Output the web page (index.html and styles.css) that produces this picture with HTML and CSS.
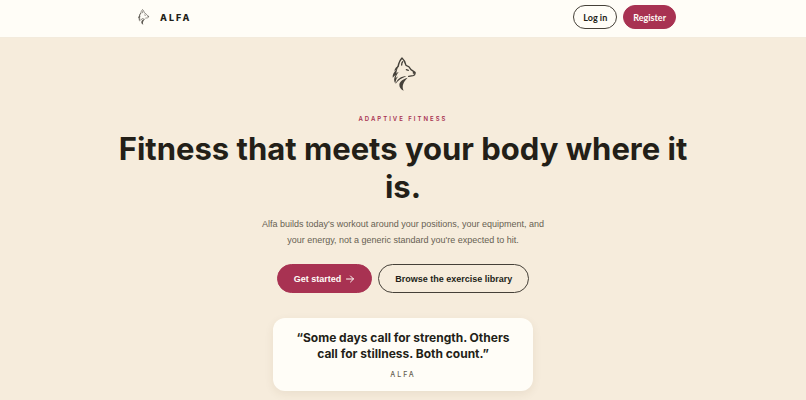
FILE: index.html
```html
<!DOCTYPE html>
<html lang="en">
<head>
	<meta charset="UTF-8">
	<meta name="viewport" content="width=device-width, initial-scale=1">
	<title>Alfa - Adaptive fitness</title>
	<link rel="stylesheet" href="styles.css">
</head>
<body>
	<svg class="sprite" aria-hidden="true">
		<symbol id="wolf" viewBox="33 18 74 102">
			<g fill="none" stroke="currentColor" stroke-width="4" stroke-linecap="round" stroke-linejoin="round">
				<path d="M55 47C57 37 60 28 67 21C74 27 77 35 79 43C87 45 91 50 94 56L106 64C107 69 104 73 100 74L87 76"/>
				<path d="M66 42C66 37 67 34 69 32"/>
				<path d="M80 56L86 58"/>
			</g>
			<g fill="currentColor">
				<path d="M59 42C51 46 45 52 44 61L51 55C42 64 38 71 39 80L48 71C42 81 42 89 47 98C48 88 50 82 55 77C52 77 50 79 48 82C49 74 52 69 57 64C54 64 52 65 50 68C51 58 54 50 59 42Z"/>
				<path d="M84 80C70 84 60 91 59 101C59 109 64 115 72 119C65 104 72 92 84 80Z"/>
				<path d="M80 76C64 76 52 84 48 98C56 87 66 82 80 76Z"/>
				<path d="M100 62L107 64L104 70L99 67Z"/>
			</g>
		</symbol>
	</svg>

	<header class="site-header">
		<div class="header-inner">
			<a class="brand" href="#">
				<svg class="brand-mark" aria-hidden="true"><use href="#wolf"/></svg>
				<span>ALFA</span>
			</a>
			<nav class="header-nav">
				<button class="btn btn-small btn-outline" type="button">Log in</button>
				<button class="btn btn-small btn-primary" type="button">Register</button>
			</nav>
		</div>
	</header>

	<main class="hero">
		<svg class="hero-mark" aria-hidden="true"><use href="#wolf"/></svg>
		<p class="eyebrow">ADAPTIVE FITNESS</p>
		<h1>Fitness that meets your body where it is.</h1>
		<p class="lead">Alfa builds today's workout around your positions, your equipment, and your energy, not a generic standard you're expected to hit.</p>
		<div class="actions">
			<a class="btn btn-primary" href="#">Get started
				<svg class="arrow" viewBox="0 0 10 10" aria-hidden="true"><path d="M1.500 5H8.500M5.500 2L8.500 5L5.500 8"/></svg>
			</a>
			<a class="btn btn-outline" href="#">Browse the exercise library</a>
		</div>
		<figure class="quote">
			<blockquote>“Some days call for strength. Others call for stillness. Both count.”</blockquote>
			<figcaption>ALFA</figcaption>
		</figure>
	</main>
</body>
</html>
```

FILE: styles.css
```css
:root {
	--cream: #f6ecdc;
	--paper: #fffdf7;
	--ink: #231f18;
	--muted: #675f52;
	--berry: #a83252;
	--heading: Inter, "Liberation Sans", sans-serif;
	--body: "Liberation Sans", Arial, sans-serif;
}

* {
	box-sizing: border-box;
}

body {
	margin: 0;
	background: var(--cream);
	color: var(--ink);
	font-family: var(--body);
	font-size: 9px;
}

.sprite {
	position: absolute;
	width: 0;
	height: 0;
}

/* header */
.site-header {
	background: var(--paper);
	padding: 5px 16px 8px;
	border-bottom: 1px solid #f3ebdd;
}

.header-inner {
	display: flex;
	align-items: center;
	justify-content: space-between;
	max-width: 546px;
	margin: 0 auto;
}

.brand {
	display: flex;
	align-items: center;
	gap: 4px;
	color: var(--ink);
	font-family: var(--heading);
	font-size: 9px;
	font-weight: 800;
	letter-spacing: 2px;
	text-decoration: none;
}

.brand-mark {
	width: 26px;
	height: 16px;
	color: #5d5952;
}

.header-nav {
	display: flex;
	gap: 6px;
}

/* buttons */
.btn {
	display: inline-flex;
	align-items: center;
	gap: 4px;
	height: 29px;
	padding: 0 16px;
	border: 1px solid transparent;
	border-radius: 15px;
	font-family: var(--body);
	font-size: 9px;
	font-weight: 700;
	text-decoration: none;
	white-space: nowrap;
	cursor: pointer;
}

.btn-small {
	height: 24px;
	padding: 0 9px;
	font-family: Lato, sans-serif;
}

.btn-primary {
	background: var(--berry);
	border-color: var(--berry);
	color: var(--paper);
}

.btn-outline {
	background: transparent;
	border-color: #454038;
	color: var(--ink);
}

.arrow {
	width: 10px;
	height: 10px;
	fill: none;
	stroke: currentColor;
	stroke-linecap: round;
	stroke-linejoin: round;
}

/* hero */
.hero {
	display: flex;
	flex-direction: column;
	align-items: center;
	max-width: 606px;
	margin: 0 auto;
	padding: 19px 16px 9px;
	text-align: center;
}

.hero-mark {
	width: 26px;
	height: 34px;
	color: #45413a;
}

.eyebrow {
	margin: 23px 0 6px;
	color: var(--berry);
	font-family: var(--heading);
	font-size: 6px;
	font-weight: 600;
	line-height: 10px;
	letter-spacing: 2px;
}

h1 {
	margin: 0;
	font-family: var(--heading);
	font-size: 31px;
	font-weight: 700;
	line-height: 38px;
}

.lead {
	max-width: 300px;
	margin: 10px 0 16px;
	color: var(--muted);
	line-height: 16px;
}

.actions {
	display: flex;
	flex-wrap: wrap;
	justify-content: center;
	gap: 6px;
}

.quote {
	width: 100%;
	max-width: 260px;
	margin: 25px 0 0;
	padding: 12px 20px 11px;
	border-radius: 12px;
	background: var(--paper);
	box-shadow: 0 3px 10px rgba(90, 60, 20, 0.08);
}

blockquote {
	margin: 0;
	font-family: var(--heading);
	font-size: 12px;
	font-weight: 700;
	line-height: 16px;
}

figcaption {
	margin-top: 8px;
	color: var(--muted);
	font-family: var(--heading);
	font-size: 7px;
	font-weight: 500;
	line-height: 10px;
	letter-spacing: 2px;
}
```
